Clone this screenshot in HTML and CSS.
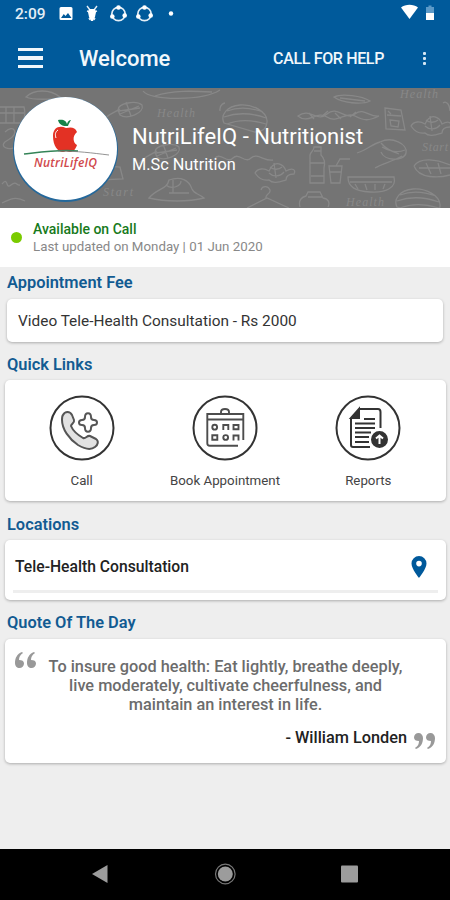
FILE: index.html
```html
<!DOCTYPE html>
<html lang="en">
<head>
    <meta charset="UTF-8">
    <meta name="viewport" content="width=device-width, initial-scale=1.0">
    <title>NutriLifeIQ</title>
    <link rel="stylesheet" href="styles.css">
</head>
<body>
    <div class="statusbar">
        <span class="time">2:09</span>
        <svg class="status-icons" width="112" height="20" viewBox="62 4 112 20">
            <path fill="#fff" fill-rule="evenodd" d="M62 7h10a1.500 1.500 0 0 1 1.500 1.500v10a1.500 1.500 0 0 1-1.500 1.500H62a1.500 1.500 0 0 1-1.500-1.500v-10A1.500 1.500 0 0 1 62 7zm0 11h10.500l-3.500-5-2.500 3-1.700-2z"/>
            <g fill="none" stroke="#e4eef6" stroke-width="1.400">
                <path d="M88 6l3 4M98 6l-3 4M88 11l3 1M98 11l-3 1M90 18l1 2M96 18l-1 2"/>
                <path fill="#fff" stroke="none" d="M90 9h6l1 3-1 5-2 4h-2l-2-4-1-5z"/>
            </g>
            <g id="share">
                <circle cx="119.500" cy="14" r="6.700" fill="none" stroke="#e4eef6" stroke-width="1.700"/>
                <circle cx="119.500" cy="7.500" r="2.300" fill="#fff"/>
                <circle cx="113.300" cy="16.500" r="2.300" fill="#fff"/>
                <circle cx="125.700" cy="15.500" r="2.300" fill="#fff"/>
            </g>
            <use href="#share" x="26"/>
            <circle cx="172" cy="13.500" r="2.200" fill="#fff"/>
        </svg>
        <svg class="status-right" width="34" height="18" viewBox="0 0 34 18">
            <path fill="#fff" d="M0 3.500C4.500-.3 12.500-.3 17 3.500L8.500 15z"/>
            <path fill="#5c9ac8" d="M27.500 1.500h3V3H33v6h-8V3h2.500z"/>
            <path fill="#fff" d="M25 9h8v7h-8z"/>
        </svg>
    </div>

    <header class="toolbar">
        <div class="menu"><span></span><span></span><span></span></div>
        <h1>Welcome</h1>
        <div class="help">CALL FOR HELP</div>
        <div class="dots"><span></span><span></span><span></span></div>
    </header>

    <section class="banner">
        <!-- food doodles behind the profile -->
        <svg class="doodles" width="450" height="120" viewBox="0 88 450 120" fill="none" stroke="#969696" stroke-width="1.300">
            <g class="script" stroke="none" fill="#969696">
                <text x="157" y="117" textLength="38">Health</text>
                <text x="400" y="98" textLength="38">Health</text>
                <text x="103" y="196" textLength="30">Start</text>
                <text x="422" y="151" textLength="26">Start</text>
                <text x="346" y="206" textLength="38">Health</text>
            </g>
            <g id="whisk">
                <path d="M102 122c5-8 12-9 18-13M118 110c0-7 18-10 24-5 3 8-15 15-22 10zM119 111l21-3M120 114l19-8M126 102l5 14"/>
            </g>
            <use href="#whisk" x="37" y="42"/>
            <g id="melon">
                <path d="M224 123c-4-8 3-17 16-18s28 7 27 17-8 9-12 10zM227 111c13-5 25-3 36 1M224 117c14-5 28-4 42 1M227 124c12-5 26-4 39 0"/>
            </g>
            <use href="#melon" x="173" y="84"/>
            <path d="M143 91c7 10 60 10 77-1M155 96c18-6 38-5 57-4M334 97c8-4 28-1 36 4-8 4-28 2-36-4zM340 98l25 3"/>
            <path d="M298 116c12-9 19 7 29-2s19 7 28 0 15 4 24 2c-10 5-15 5-24 0s-18 8-28 1-19 8-29-1zM309 113l5 6M321 117l7-6M335 113l6 6M350 117l6-5"/>
            <path d="M385 108l16 2 4 20-19-1zM387 115l14 1M390 120l9 1-1 6-7-1zM388 111l3 3"/>
            <g id="candy">
                <path d="M411 126c3-5 9-5 14-2 6-13 15-6 17 0 7-4 10-1 8 3-7 0-8 4-8 6-7 2-13 4-17 0-6 1-10-1-14-7zM426 120c3 3 9 3 12 0M425 126c4 4 11 4 15-1M430 116l2 15"/>
            </g>
            <use href="#candy" x="-156" y="47"/>
            <path d="M357 153c10-3 15-9 23-11 12-6 28 2 26 11s-22 8-25-1M382 147c7 4 16 6 23 3M375 168c8-5 17-6 27-12M381 143c4 5 9 8 18 11"/>
            <path d="M314 147h7v8c4 4 4 9 3 13v15h-14v-28c1-4 4-4 4-8zM310 163h14M311 176h13M314 151h7M329 166h13l-2 17h-9zM336 166l4-7h10M330 172h11"/>
            <path d="M348 177h46c3 11-9 16-24 15s-22-5-22-15zM350 182h42M355 184l3 5M365 184l2 6M375 184v6M385 184l-2 5"/>
            <path d="M247 208l20-10 22 10M266 198c-1-4 5-4 4-8-2-5-8-4-9 0M300 207c-2-7 2-10 6-11l2-4h12l3 6c6 1 7 5 5 9M308 197h14"/>
            <path d="M149 198c8-10 18-8 20-18 12-4 20 0 23 9 2 5 6 4 12 9-15 4-39 4-55 0zM166 185c6 5 15 1 15-4M169 193h20M173 180v13"/>
            <path d="M26 97c8-8 24-8 34 0-6 3-28 3-34 0zM0 107h24c2 8 0 13-3 16H0M0 113h24M6 107v16M14 107v16M5 132c9-9 15 2 3 8s2 13 11 5M414 166c6-9 22-7 36-1M414 166c5 13 25 12 36 9M419 168h31M426 163l5 11M438 163l3 11M443 103c4-3 7 3 7 8M220 111c-1-7 5-8 5-8"/>
            <path d="M215 158c6-6 12 6 18 0s12 6 18 0 14 4 22 2M2 203c8-4 14-7 23-2M2 184c7-8 3 6 9 1s5 1 9 0M94 165l26 2 3 12-25 1z"/>
        </svg>
        <div class="avatar">
            <svg width="102" height="102" viewBox="14 97 102 102">
                <path fill="#168348" d="M66 126c-4 0-7-2-8-6 6-1 8 1 9 4 1-3 2-4 4-4-1 2-2 3-3 6z"/>
                <path fill="#e33124" d="M66 128c-7-3-13 0-13 8 0 10 5 16 10 16 2 0 2-1 3-1s2 1 4 1c4 0 6-4 7-7-4-2-5-9 0-13-2-5-6-5-11-4z"/>
                <path fill="none" stroke="#fff" stroke-width="1" d="M58 130c-3 2-3 5-2 8"/>
                <path fill="none" stroke="#348357" stroke-width="1.500" d="M24 154c17-2 36-5 54-3"/>
                <path fill="none" stroke="#777" stroke-width=".8" d="M58 151c20 0 34 2 51 4"/>
                <text class="logo-text" x="34" y="167" textLength="63">NutriLifeIQ</text>
            </svg>
        </div>
        <div class="profile">
            <div class="name">NutriLifeIQ - Nutritionist</div>
            <div class="degree">M.Sc Nutrition</div>
        </div>
    </section>

    <section class="availability">
        <span class="online"></span>
        <div>
            <div class="available">Available on Call</div>
            <div class="updated">Last updated on Monday | 01 Jun 2020</div>
        </div>
    </section>

    <main>
        <h2 class="fee-title">Appointment Fee</h2>
        <div class="card fee">Video Tele-Health Consultation - Rs 2000</div>

        <h2 class="links-title">Quick Links</h2>
        <div class="card links">
            <div class="link">
                <svg width="66" height="66" viewBox="0 0 66 66" fill="none" stroke="#555" stroke-width="2" stroke-linejoin="round">
                    <circle cx="33" cy="33" r="31.500" stroke="#333"/>
                    <path fill="#e2e2e2" d="M14 20c2-4 7-4 9 0l2 5c1 3-3 4-3 6 2 5 7 9 12 12 3 1 4-3 7-2l6 3c3 2 2 6-1 8-5 4-12 1-17-2-9-6-16-16-16-25 0-2 0-4 1-5z"/>
                    <path d="M36 22c0-5 6-5 6 0 0 2 1 3 3 3 4 0 4 5 0 5-2 0-3 1-3 3 0 5-6 5-6 0 0-2-1-3-3-3-4 0-4-5 0-5 2 0 3-1 3-3z"/>
                </svg>
                <span>Call</span>
            </div>
            <div class="link">
                <svg width="66" height="66" viewBox="0 0 66 66" fill="none" stroke="#4d4d4d" stroke-width="1.900">
                    <circle cx="33" cy="33" r="31.500" stroke="#333" stroke-width="2"/>
                    <path d="M51.300 45V19H15.300v29.200q0 2.500 2.500 2.500H46M15.300 24.500h36M29 19v-2q0-3 4-3t4 3v2"/>
                    <path d="M31.300 35v-5h5v5M41.500 30h5v4.300h-5zM20.300 40.200h5v4.500h-5zM41.500 45.500v-5h5v5"/>
                    <circle cx="22.700" cy="32.200" r="2.400"/>
                    <circle cx="33.700" cy="42.500" r="2.400"/>
                </svg>
                <span>Book Appointment</span>
            </div>
            <div class="link">
                <svg width="66" height="66" viewBox="0 0 66 66" fill="none" stroke="#333" stroke-width="2">
                    <circle cx="33" cy="33" r="31.500"/>
                    <path d="M16 23V50q0 2 2 2h17M24 14h19q2.500 0 2.500 3v16"/>
                    <path fill="#333" d="M16 23l8-9v9z"/>
                    <path d="M29 24h11M20 28.500h20M20 33h20M20 37.500h16M20 42h14M20 47h14"/>
                    <circle cx="44.500" cy="44.500" r="7.500" fill="#333"/>
                    <path stroke="#fff" d="M44.500 49v-8M41 43.500l3.500-3 3.500 3"/>
                </svg>
                <span>Reports</span>
            </div>
        </div>

        <h2 class="locations-title">Locations</h2>
        <div class="card locations">
            <div class="location">
                <span>Tele-Health Consultation</span>
                <svg width="16" height="22" viewBox="0 0 16 22">
                    <path fill="#00599b" fill-rule="evenodd" d="M8 0a7.500 7.500 0 0 0-7.500 7.500C.5 13 8 22 8 22s7.500-9 7.500-14.500A7.500 7.500 0 0 0 8 0zm0 4.800a2.800 2.800 0 1 1 0 5.600 2.800 2.800 0 0 1 0-5.600z"/>
                </svg>
            </div>
        </div>

        <h2 class="quote-title">Quote Of The Day</h2>
        <div class="card quote">
            <svg class="mark" width="22" height="17" viewBox="0 0 22 17" fill="#999">
                <path id="comma" d="M7 0C2 2 0 6 0 11c0 3 2 5 4.500 5S9 14 9 11.500 7 8 4 8c0-3 1-5 4-7z"/>
                <use href="#comma" x="12"/>
            </svg>
            <p>To insure good health: Eat lightly, breathe deeply,<br>live moderately, cultivate cheerfulness, and<br>maintain an interest in life.</p>
            <div class="author">
                <span>- William Londen</span>
                <svg width="22" height="17" viewBox="0 0 22 17" fill="#999">
                    <g transform="rotate(180 11 8.500)">
                        <use href="#comma"/>
                        <use href="#comma" x="12"/>
                    </g>
                </svg>
            </div>
        </div>
    </main>

    <nav class="navbar">
        <svg width="450" height="51" viewBox="0 849 450 51" fill="#9c9c9c">
            <path d="M92 874l15.500-9v18z"/>
            <circle cx="225.300" cy="874" r="7.500"/>
            <circle cx="225.300" cy="874" r="9.800" fill="none" stroke="#777" stroke-width="1.200"/>
            <rect x="341" y="865.500" width="17" height="17" rx="1"/>
        </svg>
    </nav>
</body>
</html>
```

FILE: styles.css
```css
* {
    box-sizing: border-box;
}
body {
    font-family: Roboto, "Liberation Sans", sans-serif;
    margin: 0;
    height: 900px;
    display: flex;
    flex-direction: column;
    background: #eee;
    color: #222;
    overflow: hidden;
    white-space: nowrap;
}
svg {
    display: block;
    flex: none;
}
.statusbar {
    height: 28px;
    background: #005a9b;
    display: flex;
    align-items: center;
    padding-left: 15px;
    color: #fff;
}
.time {
    width: 46px;
    font-size: 15.5px;
    font-weight: 500;
    color: #e4eef6;
}
.status-icons {
    overflow: visible;
}
.status-right {
    margin: -2px 15px 0 auto;
}
.toolbar {
    height: 60px;
    background: #005a9b;
    color: #f1f7fb;
    display: flex;
    align-items: center;
    padding: 0 24px 0 18px;
}
.menu {
    width: 25px;
    display: flex;
    flex-direction: column;
    gap: 5px;
}
.menu span {
    height: 3.5px;
    background: #f1f7fb;
}
h1 {
    margin: 0 0 0 36px;
    font-size: 22px;
    font-weight: 500;
}
.help {
    margin-left: auto;
    font-size: 16px;
    font-weight: 500;
    letter-spacing: -0.35px;
}
.dots {
    margin-left: 39px;
    display: flex;
    flex-direction: column;
    gap: 2px;
}
.dots span {
    width: 3px;
    height: 3px;
    border-radius: 1px;
    background: #d5e8f5;
}
.banner {
    position: relative;
    height: 120px;
    background: #747474;
    display: flex;
    padding: 9px 0 0 14px;
}
.doodles {
    position: absolute;
    left: 0;
    top: 0;
    opacity: 0.6;
}
.script {
    font-family: "Liberation Serif", serif;
    font-style: italic;
    font-size: 12px;
}
.avatar {
    position: relative;
    width: 103px;
    height: 103px;
    border-radius: 50%;
    background: #fff;
    box-shadow: 0 1px 0 1px #24689b;
}
.logo-text {
    font-family: "Open Sans", sans-serif;
    font-size: 12px;
    font-style: italic;
    font-weight: 600;
    fill: #d0484c;
}
.profile {
    position: relative;
    margin: 26px 0 0 15px;
    color: #fff;
}
.name {
    font-size: 22px;
    line-height: 28px;
}
.degree {
    font-size: 16.3px;
    line-height: 28px;
}
.availability {
    height: 59px;
    background: #fff;
    display: flex;
    align-items: center;
    gap: 11px;
    padding-left: 11px;
}
.online {
    width: 11px;
    height: 11px;
    border-radius: 50%;
    background: #7acb00;
}
.available {
    font-size: 14px;
    line-height: 18px;
    font-weight: 500;
    color: #177a1b;
}
.updated {
    font-size: 13.3px;
    line-height: 18px;
    color: #888;
}
main {
    flex: 1;
}
h2 {
    margin: 0;
    padding-left: 7px;
    font-size: 16.4px;
    font-weight: 600;
    color: #125b92;
    display: flex;
    align-items: center;
}
.fee-title {
    height: 32px;
    padding-bottom: 2px;
}
.links-title {
    height: 38px;
    padding-top: 6px;
}
.locations-title {
    height: 39px;
    padding-top: 7px;
}
.quote-title {
    height: 39px;
    padding-top: 5px;
}
.card {
    margin: 0 4px 0 5px;
    background: #fff;
    border-radius: 5px;
    box-shadow: 0 1px 3px rgba(0, 0, 0, 0.28);
}
.fee {
    height: 43px;
    margin: 0 7px;
    padding: 1px 0 0 11px;
    font-size: 15.4px;
    line-height: 43px;
    color: #333;
}
.links {
    height: 121px;
    padding: 15px 6px 0 5px;
    display: grid;
    grid-template-columns: repeat(3, 1fr);
}
.link {
    display: flex;
    flex-direction: column;
    align-items: center;
    gap: 12px;
    font-size: 13.3px;
    color: #444;
}
.locations {
    height: 60px;
    padding: 0 8px;
}
.location {
    height: 53px;
    border-bottom: 3px solid #eee;
    display: flex;
    align-items: center;
    justify-content: space-between;
    padding: 3px 11px 0 2px;
    font-size: 15.7px;
    font-weight: 500;
}
.quote {
    height: 124px;
    padding-top: 18px;
    position: relative;
}
.mark {
    position: absolute;
    left: 10px;
    top: 13px;
}
.quote p {
    margin: 0;
    text-align: center;
    font-size: 16.3px;
    font-weight: 500;
    line-height: 19px;
    color: #6c6c6c;
}
.author {
    margin-top: 14px;
    display: flex;
    justify-content: flex-end;
    gap: 6px;
    padding-right: 11px;
    font-size: 16.3px;
    line-height: 19px;
    font-weight: 500;
}
.author svg {
    margin-top: 4px;
}
.navbar {
    height: 51px;
    background: #000;
}
```
